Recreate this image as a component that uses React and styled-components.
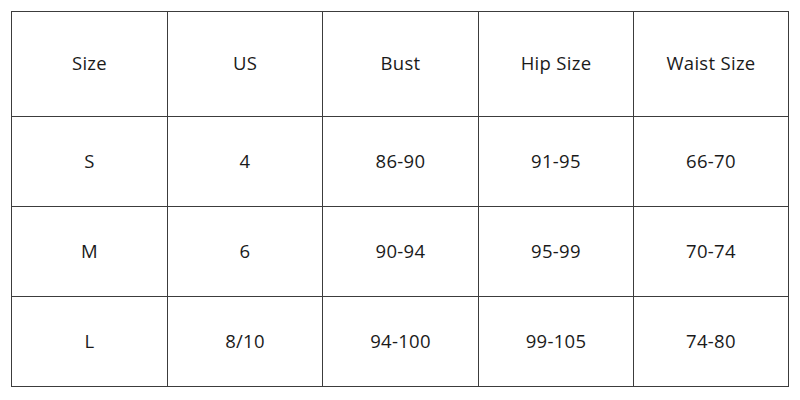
import React from "react";
import styled, { createGlobalStyle } from "styled-components";

const GlobalStyle = createGlobalStyle`
  body {
    margin: 0;
    background: #ffffff;
    font-family: "Open Sans", "Liberation Sans", sans-serif;
  }
`;

const headers = ["Size", "US", "Bust", "Hip Size", "Waist Size"];
const widths = [156, 155, 156, 155, 155];

const rows = [
  ["S", "4", "86-90", "91-95", "66-70"],
  ["M", "6", "90-94", "95-99", "70-74"],
  ["L", "8/10", "94-100", "99-105", "74-80"],
];

const Page = styled.div`
  width: 800px;
  height: 400px;
  padding: 11px 0 0 11px;
  box-sizing: border-box;
`;

const Table = styled.table`
  border-collapse: collapse;
  table-layout: fixed;
  width: 777px;
  color: #1a1a1a;
`;

const Col = styled.col`
  width: ${(p) => p.$w}px;
`;

const Cell = styled.td`
  border: 1px solid #3c3c3c;
  height: ${(p) => (p.$head ? "100px" : "86px")};
  padding: ${(p) => (p.$head ? "0 0 4px" : "0 0 3px")};
  text-align: center;
  vertical-align: middle;
  font-size: 18.5px;
  font-weight: 400;
  letter-spacing: 0.3px;
`;

const App = () => {
  return (
    <Page>
      <GlobalStyle />
      <Table>
        <colgroup>
          {widths.map((w, i) => (
            <Col key={i} $w={w} />
          ))}
        </colgroup>
        <tbody>
          <tr>
            {headers.map((h) => (
              <Cell key={h} $head>
                {h}
              </Cell>
            ))}
          </tr>
          {rows.map((r) => (
            <tr key={r[0]}>
              {r.map((v, i) => (
                <Cell key={i}>{v}</Cell>
              ))}
            </tr>
          ))}
        </tbody>
      </Table>
    </Page>
  );
};

export default App;
